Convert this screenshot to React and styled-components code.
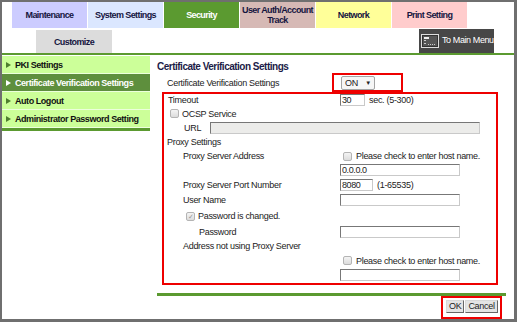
import styled, { createGlobalStyle } from "styled-components";

const GlobalStyle = createGlobalStyle`
  body {
    margin: 0;
    background: #6f6f6f;
    font-family: "Liberation Sans", Arial, sans-serif;
  }
`;

const Frame = styled.div`
  width: 517px;
  height: 322px;
  box-sizing: border-box;
  padding: 2px 3px 3px 2px;
  background: #6f6f6f;
`;

const Inner = styled.div`
  height: 317px;
  background: #fff;
  overflow: hidden;
  display: flex;
  flex-direction: column;
`;

const Header = styled.div`
  height: 51px;
  display: flex;
  flex-direction: column;
`;

const TabRow = styled.div`
  display: flex;
  height: 26px;
  padding-left: 10px;
`;

const Tab = styled.div`
  width: 76px;
  box-sizing: border-box;
  border-right: 1px solid #fff;
  background: ${(p) => p.bg};
  color: ${(p) => (p.active ? "#fff" : "#15153f")};
  display: flex;
  align-items: center;
  justify-content: center;
  text-align: center;
  font-size: 9px;
  font-weight: bold;
  letter-spacing: -0.6px;
  line-height: 10px;
`;

const SubRow = styled.div`
  display: flex;
  height: 25px;
  align-items: flex-end;
`;

const Customize = styled.div`
  margin-left: 34px;
  width: 76px;
  height: 23px;
  background: #dcdcdc;
  color: #15153f;
  display: flex;
  align-items: center;
  justify-content: center;
  font-size: 9px;
  font-weight: bold;
  letter-spacing: -0.6px;
`;

const MainMenu = styled.div`
  margin-left: auto;
  margin-right: 20px;
  width: 75px;
  height: 24px;
  background: #474747;
  color: #fff;
  display: flex;
  align-items: flex-start;
  gap: 3px;
  padding: 5px 0 0 2px;
  box-sizing: border-box;
  font-size: 9px;
  letter-spacing: -0.4px;
  white-space: nowrap;
  overflow: hidden;
`;

const MenuText = styled.span`
  padding-top: 1px;
`;

const GreenLine = styled.div`
  height: 3px;
  background: #5b9a30;
  margin-top: ${(p) => p.mt || 0}px;
`;

const Body = styled.div`
  flex: 1;
  display: flex;
`;

const Sidebar = styled.div`
  width: 148px;
  align-self: flex-start;
  padding-top: 1px;
  display: flex;
  flex-direction: column;
`;

const NavItem = styled.div`
  height: 17px;
  border-bottom: 1px solid #ecffdc;
  background: ${(p) => (p.selected ? "#5e8f3d" : "#ccff99")};
  color: ${(p) => (p.selected ? "#fff" : "#111")};
  display: flex;
  align-items: center;
  gap: 4px;
  padding-left: 4px;
  font-size: 9px;
  font-weight: bold;
  letter-spacing: -0.45px;
  white-space: nowrap;
`;

const Arrow = styled.span`
  width: 0;
  height: 0;
  border-top: 3px solid transparent;
  border-bottom: 3px solid transparent;
  border-left: 5px solid ${(p) => (p.selected ? "#fff" : "#4e7f2e")};
`;

const SideBottom = styled.div`
  height: 3px;
  background: #5b9a30;
`;

const Main = styled.div`
  flex: 1;
  display: flex;
  flex-direction: column;
  padding: 0 8px 0 7px;
  font-size: 9px;
  color: #222;
  letter-spacing: -0.3px;
`;

const Title = styled.div`
  padding-top: 6px;
  height: 12px;
  line-height: 12px;
  font-size: 10px;
  font-weight: bold;
  color: #1c1c48;
  letter-spacing: -0.5px;
`;

const CertRow = styled.div`
  display: flex;
  align-items: center;
  height: 19px;
`;

const CertLabel = styled.div`
  width: 175px;
  box-sizing: border-box;
  padding-left: 10px;
`;

const RedBox = styled.div`
  border: 2px solid #ee0000;
  box-sizing: border-box;
  display: flex;
  align-items: ${(p) => p.align || "center"};
  gap: ${(p) => p.gap || 0}px;
  padding: ${(p) => p.pad || "0"};
  width: ${(p) => (p.w ? `${p.w}px` : "auto")};
  height: ${(p) => (p.h ? `${p.h}px` : "auto")};
`;

const Select = styled.div`
  width: 34px;
  height: 14px;
  box-sizing: border-box;
  border: 1px solid #a4a4a4;
  border-radius: 2px;
  background: #f6f6f6;
  display: flex;
  align-items: center;
  justify-content: space-between;
  padding: 0 3px 0 3px;
  font-size: 9px;
`;

const Caret = styled.span`
  font-size: 6px;
`;

const FieldBox = styled.div`
  margin: 0 8px 0 5px;
  border: 2px solid #ee0000;
  padding: 0 0 1px 0;
  display: flex;
  flex-direction: column;
`;

const Row = styled.div`
  height: ${(p) => p.h}px;
  display: flex;
  align-items: center;
  white-space: nowrap;
`;

const Label = styled.div`
  width: ${(p) => p.w || 176}px;
  box-sizing: border-box;
  padding-left: ${(p) => p.indent || 0}px;
  display: flex;
  align-items: center;
  gap: 3px;
  flex-shrink: 0;
`;

const Value = styled.div`
  display: flex;
  align-items: center;
  gap: 4px;
  padding-left: ${(p) => p.indent || 0}px;
`;

const Input = styled.input`
  width: ${(p) => p.w}px;
  height: 12px;
  box-sizing: border-box;
  margin: 0;
  padding: 0 1px;
  border: 1px solid;
  border-color: #777 #c9c9c9 #c9c9c9 #777;
  background: ${(p) => (p.disabled ? "#ececea" : "#fff")};
  font-family: "Liberation Sans", Arial, sans-serif;
  font-size: 9px;
  letter-spacing: -0.4px;
  color: #222;
  outline: none;
`;

const Check = styled.span`
  width: 9px;
  height: 9px;
  box-sizing: border-box;
  border: 1px solid #b4b4b4;
  border-radius: 2px;
  background: linear-gradient(#f4f4f4, #dcdcdc);
  display: inline-flex;
  align-items: center;
  justify-content: center;
  font-size: 7px;
  line-height: 1;
  color: #999;
  flex-shrink: 0;
`;

const Muted = styled.span`
  color: ${(p) => (p.dim ? "#555" : "inherit")};
`;

const ButtonBar = styled.div`
  display: flex;
  justify-content: flex-end;
  margin-right: 4px;
`;

const Button = styled.button`
  height: 13px;
  margin: 0;
  padding: 0 2px;
  border: 1px solid;
  border-color: #d8d8d8 #666 #666 #d8d8d8;
  background: #e4e4e4;
  font-family: "Liberation Sans", Arial, sans-serif;
  font-size: 9px;
  letter-spacing: -0.3px;
  color: #222;
  line-height: 11px;
`;

const MenuIcon = () => (
  <svg width="18" height="14" viewBox="0 0 18 14">
    <rect x="0.5" y="0.5" width="17" height="13" fill="#333" stroke="#ddd" />
    <rect x="2" y="2" width="14" height="10" fill="#555" />
    <rect x="3" y="3" width="5" height="2" fill="#eee" />
    <rect x="3" y="6" width="2" height="1" fill="#ccc" />
    <rect x="3" y="9" width="2" height="1" fill="#ccc" />
    <rect x="7" y="10" width="1" height="1" fill="#ccc" />
    <rect x="9" y="10" width="1" height="1" fill="#ccc" />
    <rect x="11" y="10" width="1" height="1" fill="#ccc" />
    <rect x="13" y="10" width="1" height="1" fill="#ccc" />
  </svg>
);

const tabs = [
  { label: "Maintenance", bg: "#ccccff" },
  { label: "System Settings", bg: "#dbe7ff" },
  { label: "Security", bg: "#5b9a30", active: true },
  { label: "User Auth/Account Track", bg: "#d6b9b5" },
  { label: "Network", bg: "#ffff99" },
  { label: "Print Setting", bg: "#ffcccc" },
];

const navItems = [
  "PKI Settings",
  "Certificate Verification Settings",
  "Auto Logout",
  "Administrator Password Setting",
];

const App = () => {
  return (
    <Frame>
      <GlobalStyle />
      <Inner>
        <Header>
          <TabRow>
            {tabs.map((t) => (
              <Tab key={t.label} bg={t.bg} active={t.active}>
                {t.label === "User Auth/Account Track" ? (
                  <span>
                    User Auth/Account
                    <br />
                    Track
                  </span>
                ) : (
                  t.label
                )}
              </Tab>
            ))}
          </TabRow>
          <SubRow>
            <Customize>Customize</Customize>
            <MainMenu>
              <MenuIcon />
              <MenuText>To Main Menu</MenuText>
            </MainMenu>
          </SubRow>
        </Header>
        <GreenLine />
        <Body>
          <Sidebar>
            {navItems.map((n, i) => (
              <NavItem key={n} selected={i === 1}>
                <Arrow selected={i === 1} />
                {n}
              </NavItem>
            ))}
            <SideBottom />
          </Sidebar>
          <Main>
            <Title>Certificate Verification Settings</Title>
            <CertRow>
              <CertLabel>Certificate Verification Settings</CertLabel>
              <RedBox w={71} h={19} pad="0 0 0 7px">
                <Select>
                  ON <Caret>▼</Caret>
                </Select>
              </RedBox>
            </CertRow>
            <FieldBox>
              <Row h={12}>
                <Label indent={4}>Timeout</Label>
                <Value>
                  <Input w={25} value="30" readOnly />
                  sec. (5-300)
                </Value>
              </Row>
              <Row h={15}>
                <Label indent={6}>
                  <Check />
                  OCSP Service
                </Label>
              </Row>
              <Row h={14}>
                <Label indent={20} w={46}>URL</Label>
                <Input w={270} disabled value="" readOnly />
              </Row>
              <Row h={14}>
                <Label indent={3}>Proxy Settings</Label>
              </Row>
              <Row h={14}>
                <Label indent={19}>Proxy Server Address</Label>
                <Value indent={3}>
                  <Check />
                  <Muted>Please check to enter host name.</Muted>
                </Value>
              </Row>
              <Row h={14}>
                <Label />
                <Input w={120} value="0.0.0.0" readOnly />
              </Row>
              <Row h={16}>
                <Label indent={19}>Proxy Server Port Number</Label>
                <Value>
                  <Input w={33} value="8080" readOnly />
                  (1-65535)
                </Value>
              </Row>
              <Row h={14}>
                <Label indent={19}>User Name</Label>
                <Input w={120} value="" readOnly />
              </Row>
              <Row h={18}>
                <Label indent={22}>
                  <Check>✓</Check>
                  Password is changed.
                </Label>
              </Row>
              <Row h={14}>
                <Label indent={35}>Password</Label>
                <Input w={120} value="" readOnly />
              </Row>
              <Row h={14}>
                <Label indent={19}>Address not using Proxy Server</Label>
              </Row>
              <Row h={15}>
                <Label />
                <Value indent={3}>
                  <Check />
                  <Muted>Please check to enter host name.</Muted>
                </Value>
              </Row>
              <Row h={14}>
                <Label />
                <Input w={120} value="" readOnly />
              </Row>
            </FieldBox>
            <GreenLine mt={8} />
            <ButtonBar>
              <RedBox w={61} h={23} align="flex-start" gap={1} pad="2px 0 0 3px">
                <Button>OK</Button>
                <Button>Cancel</Button>
              </RedBox>
            </ButtonBar>
          </Main>
        </Body>
      </Inner>
    </Frame>
  );
};

export default App;
